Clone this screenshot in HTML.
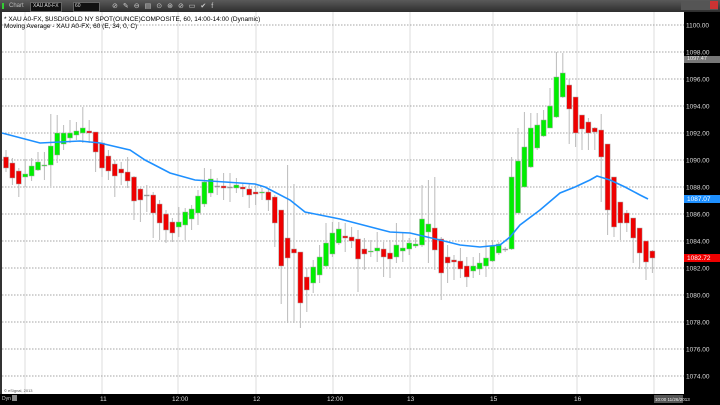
<!DOCTYPE html>
<html><head><meta charset="utf-8"><style>
*{margin:0;padding:0}
body{width:720px;height:405px;overflow:hidden;background:#000;font-family:"Liberation Sans",sans-serif;position:relative}
.tb{position:absolute;left:0;top:0;width:720px;height:12px;background:linear-gradient(#5a5a5a,#2e2e2e);}
.t{position:absolute;color:#ddd;font-size:6px;white-space:nowrap}
</style></head><body>
<div class="tb"></div>
<div style="position:absolute;left:2px;top:3px;width:2px;height:6px;background:#3c3"></div>
<div class="t" style="left:9px;top:3px;color:#bbb">Chart</div>
<div style="position:absolute;left:30px;top:2px;width:30px;height:8px;background:#111;border:1px solid #666"></div>
<div class="t" style="left:33px;top:3px;font-size:5px">XAU A0-FX</div>
<div style="position:absolute;left:73px;top:2px;width:25px;height:8px;background:#111;border:1px solid #666"></div>
<div class="t" style="left:75px;top:3px;font-size:5px">60</div>
<div class="t" style="left:112px;top:2px;color:#ccc;font-size:7px;letter-spacing:5px">⊘✎⊖▤⊙⊛⊘▭✔f</div>
<div style="position:absolute;left:681px;top:1px;width:37px;height:9px;background:#555"></div>
<div style="position:absolute;left:710px;top:1px;width:8px;height:8px;background:#c33"></div>
<svg width="720" height="405" style="position:absolute;left:0;top:0" id="s">
<rect x="2" y="12" width="682" height="382" fill="#fff"/>
<rect x="0" y="12" width="2" height="382" fill="#333"/>
<g id="grid"></g>
<g id="c"></g>
<polyline fill="none" stroke="#1e90ff" stroke-width="1.6" points="2,133 40,143 80,141 100,143 130,150 145,160 170,173 195,180 255,184 265,187 290,200 305,212 320,215 340,219 390,232 410,233 440,240 460,245 480,247 500,245 510,237 520,225 540,210 560,193 575,187 590,180 597,176 610,180 625,187 640,195 648,199"/>
<text x="4" y="21" font-size="6.5" fill="#000" font-family="Liberation Sans">* XAU A0-FX, $USD/GOLD NY SPOT(OUNCE)COMPOSITE, 60, 14:00-14:00 (Dynamic)</text>
<text x="4" y="28" font-size="6.5" fill="#000" font-family="Liberation Sans">Moving Average - XAU A0-FX, 60 (E, 34, 0, C)</text>
<text x="4" y="392" font-size="4" fill="#555" font-family="Liberation Sans">© eSignal, 2013</text>
</svg>
<script>
var s=document.getElementById('grid'),c=document.getElementById('c'),h='';
var NS='http://www.w3.org/2000/svg';
[25,102,178,256,333,410,493,577,654].forEach(function(x){h+='<line x1="'+x+'" y1="12" x2="'+x+'" y2="394" stroke="#ddd" stroke-width="1"/>';});
for(var i=0;i<14;i++){var y=25+27*i;h+='<line x1="2" y1="'+y+'" x2="684" y2="'+y+'" stroke="#888" stroke-width="0.8" stroke-dasharray="1.5,1.5"/>';
h+='<text x="686" y="'+(y+2.5)+'" font-size="6.5" fill="#ddd" font-family="Liberation Sans">'+(1100-2*i)+'.00</text>';}
s.innerHTML=h;
// [bodyTop,bodyBot,hi,lo,color g/r/n]
var d=[[157,168,150,172,'r'],[163,178,158,185,'r'],[171,184,168,197,'r'],[174,177,159,187,'g'],[166,176,158,181,'g'],[162,170,152,171,'g'],[165,166,152,180,'g'],[146,165,114,186,'g'],[133,155,115,163,'g'],[133,144,125,150,'g'],[133,138,120,143,'g'],[131,135,122,140,'g'],[128,133,107,143,'g'],[131,133,120,143,'r'],[132,152,132,172,'r'],[143,168,140,177,'r'],[156,171,150,180,'r'],[164,176,160,197,'r'],[169,173,162,185,'r'],[172,181,157,188,'r'],[177,201,176,220,'r'],[189,200,188,222,'r'],[195,195,185,212,'n'],[195,213,192,238,'r'],[204,223,200,240,'r'],[214,230,210,243,'r'],[222,233,218,242,'r'],[222,227,207,237,'g'],[212,225,208,240,'g'],[209,219,205,230,'g'],[196,213,190,225,'g'],[182,204,168,207,'g'],[179,193,169,197,'g'],[186,186,178,195,'n'],[186,188,173,200,'r'],[187,187,173,202,'n'],[185,188,178,193,'g'],[187,189,183,197,'r'],[189,195,183,208,'r'],[192,194,185,205,'r'],[192,192,188,200,'g'],[192,200,189,211,'r'],[197,223,195,247,'r'],[210,266,210,304,'r'],[238,258,165,323,'r'],[249,253,184,323,'r'],[252,303,252,328,'r'],[277,290,268,312,'r'],[267,283,260,293,'g'],[257,275,245,283,'g'],[243,266,223,267,'g'],[233,254,222,257,'g'],[229,243,222,245,'g'],[236,238,223,252,'r'],[237,241,227,248,'r'],[239,259,230,292,'r'],[249,254,238,270,'r'],[251,251,240,257,'g'],[248,251,232,262,'g'],[249,257,242,277,'r'],[253,259,240,278,'r'],[245,257,223,263,'g'],[248,251,232,262,'g'],[243,249,238,255,'g'],[244,246,238,248,'g'],[219,245,185,247,'g'],[224,232,180,263,'g'],[228,250,177,270,'r'],[239,273,237,300,'r'],[257,263,245,283,'r'],[260,262,255,280,'r'],[261,269,248,278,'r'],[266,277,257,287,'r'],[266,271,257,278,'g'],[263,269,253,275,'g'],[258,266,240,277,'g'],[246,261,240,262,'g'],[244,253,242,255,'g'],[249,249,247,252,'n'],[177,249,157,250,'g'],[161,213,128,213,'g'],[147,187,112,187,'g'],[128,167,113,168,'g'],[125,148,113,150,'g'],[120,136,110,137,'g'],[106,128,88,128,'g'],[77,117,52,118,'g'],[73,97,53,98,'g'],[85,109,79,144,'r'],[97,133,97,147,'r'],[115,129,115,150,'r'],[122,133,118,150,'r'],[128,132,127,150,'r'],[130,157,114,202,'r'],[144,210,144,235,'r'],[177,227,177,237,'r'],[202,223,202,240,'r'],[213,223,210,232,'r'],[218,238,218,263,'r'],[228,253,228,269,'r'],[241,262,241,280,'r'],[251,258,250,273,'r']];
var o='';
d.forEach(function(a,i){var x=6+6.4*i;var col=a[4]=='g'?'#00ee00':a[4]=='r'?'#ee0000':'#888';
o+='<line x1="'+x+'" y1="'+a[2]+'" x2="'+x+'" y2="'+a[3]+'" stroke="#bbb" stroke-width="1"/>';
var hh=Math.max(a[1]-a[0],1);
o+='<rect x="'+(x-2.5)+'" y="'+a[0]+'" width="5" height="'+hh+'" fill="'+col+'" stroke="#aaa" stroke-width="0.5"/>';});
c.innerHTML=o;
</script>
<div style="position:absolute;left:684px;top:56px;width:36px;height:7px;background:#777"></div>
<div class="t" style="left:687px;top:56px;font-size:5.5px;color:#eee">1097.47</div>
<div style="position:absolute;left:684px;top:195px;width:36px;height:8px;background:#1e90ff"></div>
<div class="t" style="left:687px;top:196px;font-size:6.5px;color:#fff">1087.07</div>
<div style="position:absolute;left:684px;top:254px;width:36px;height:8px;background:#e00"></div>
<div class="t" style="left:687px;top:255px;font-size:6.5px;color:#fff">1082.72</div>
<div class="t" style="left:2px;top:396px;font-size:5px;color:#ccc">Dyn</div>
<div style="position:absolute;left:12px;top:395px;width:5px;height:6px;background:#888"></div>
<div class="t" style="left:100px;top:396px;font-size:6.5px">11</div>
<div class="t" style="left:172px;top:396px;font-size:6.5px">12:00</div>
<div class="t" style="left:253px;top:396px;font-size:6.5px">12</div>
<div class="t" style="left:327px;top:396px;font-size:6.5px">12:00</div>
<div class="t" style="left:407px;top:396px;font-size:6.5px">13</div>
<div class="t" style="left:490px;top:396px;font-size:6.5px">15</div>
<div class="t" style="left:574px;top:396px;font-size:6.5px">16</div>
<div style="position:absolute;left:654px;top:395px;width:29px;height:8px;background:#555"></div>
<div class="t" style="left:655px;top:397px;font-size:4.5px;color:#eee">10:00 11/26/2013</div>
</body></html>
